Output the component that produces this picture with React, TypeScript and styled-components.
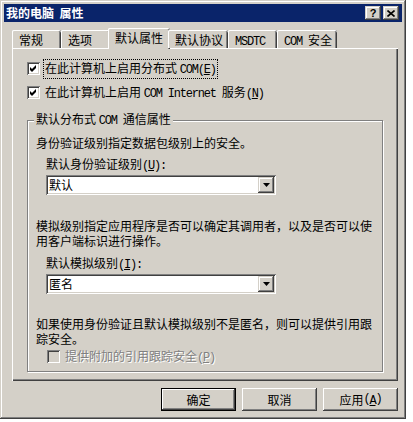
import React from "react";
import styled, { createGlobalStyle } from "styled-components";

const FACE = "#D4D0C8";

const Global = createGlobalStyle`
  html, body { margin: 0; padding: 0; background: #fff; }
  body {
    font-family: "Noto Sans CJK SC", "Noto Sans", sans-serif;
    font-size: 12px;
    color: #000;
  }
`;

const raised = `box-shadow: inset -1px -1px #404040, inset 1px 1px ${FACE}, inset -2px -2px #808080, inset 2px 2px #fff;`;
const sunken = `box-shadow: inset 1px 1px #808080, inset -1px -1px #fff, inset 2px 2px #404040, inset -2px -2px ${FACE};`;

const Window = styled.div`
  width: 406px;
  height: 419px;
  box-sizing: border-box;
  background: ${FACE};
  padding: 4px;
  box-shadow: inset -1px -1px #404040, inset 1px 1px ${FACE}, inset -2px -2px #808080, inset 2px 2px #fff;
  display: flex;
  flex-direction: column;
`;

const TitleBar = styled.div`
  height: 18px;
  background: #0a246a;
  display: flex;
  align-items: center;
  padding: 0 3px 0 2px;
  gap: 2px;
`;

const TitleText = styled.div`
  flex: 1;
  color: #fff;
  font-weight: bold;
  font-size: 12px;
  line-height: 18px;
  white-space: pre;
`;

const CapButton = styled.div`
  width: 16px;
  height: 14px;
  box-sizing: border-box;
  background: ${FACE};
  ${raised}
  display: flex;
  align-items: center;
  justify-content: center;
  font-family: "Liberation Sans", sans-serif;
  font-weight: bold;
  font-size: 11px;
  line-height: 14px;
  color: #000;
`;

const Body = styled.div`
  display: flex;
  flex-direction: column;
  padding: 6px 4px 0 8px;
`;

const TabStrip = styled.div`
  display: flex;
  align-items: flex-end;
  height: 20px;
  position: relative;
  z-index: 1;
`;

const Tab = styled.div<{ $w: number; $active?: boolean }>`
  box-sizing: border-box;
  width: ${(p) => p.$w}px;
  height: ${(p) => (p.$active ? 21 : 18)}px;
  margin: 0 ${(p) => (p.$active ? -2 : 0)}px ${(p) => (p.$active ? -1 : 0)}px;
  padding: 2px 0 0 7px;
  line-height: 15px;
  background: ${FACE};
  border-radius: 2px 2px 0 0;
  box-shadow: inset 1px 0 #fff, inset 0 1px #fff, inset -1px 0 #404040, inset -2px 0 #808080;
  white-space: nowrap;
`;

const Panel = styled.div`
  box-sizing: border-box;
  width: 386px;
  height: 333px;
  background: ${FACE};
  box-shadow: inset 1px 1px #fff, inset -1px -1px #404040, inset -2px -2px #808080;
  padding: 12px 15px 0 15px;
  display: flex;
  flex-direction: column;
`;

const CheckRow = styled.div<{ $mt?: number; $ml?: number; $h?: number }>`
  display: flex;
  align-items: center;
  gap: 3px;
  height: ${(p) => p.$h ?? 17}px;
  margin-top: ${(p) => p.$mt ?? 0}px;
  margin-left: ${(p) => p.$ml ?? 0}px;
`;

const Box = styled.div<{ $disabled?: boolean }>`
  width: 13px;
  height: 13px;
  box-sizing: border-box;
  flex: none;
  background: ${(p) => (p.$disabled ? FACE : "#fff")};
  ${sunken}
  display: flex;
  align-items: center;
  justify-content: center;
`;

const CheckLabel = styled.span<{ $focus?: boolean; $disabled?: boolean }>`
  border: 1px ${(p) => (p.$focus ? "dotted #000" : "solid transparent")};
  padding: 0 1px;
  line-height: 15px;
  white-space: nowrap;
  color: ${(p) => (p.$disabled ? "#808080" : "#000")};
  text-shadow: ${(p) => (p.$disabled ? "1px 1px 0 #fff" : "none")};
`;

const Group = styled.fieldset`
  margin: 11px 0 0 0;
  padding: 0;
  border: 1px solid #808080;
  box-shadow: 1px 1px 0 #fff, inset 1px 1px 0 #fff;
  min-inline-size: 0;
`;

const Legend = styled.legend`
  margin-left: 6px;
  padding: 0 2px;
  line-height: 14px;
  background: ${FACE};
  white-space: nowrap;
`;

const GroupInner = styled.div`
  display: flex;
  flex-direction: column;
  padding: 7px 0 7px 8px;
`;

const Para = styled.div<{ $mt?: number }>`
  width: 340px;
  line-height: 15px;
  margin-top: ${(p) => p.$mt ?? 0}px;
`;

const FieldLabel = styled.div<{ $mt: number }>`
  margin: ${(p) => p.$mt}px 0 0 10px;
  line-height: 14px;
  white-space: nowrap;
`;

const Combo = styled.div`
  box-sizing: border-box;
  width: 230px;
  height: 20px;
  margin: 2px 0 0 10px;
  background: #fff;
  ${sunken}
  display: flex;
  align-items: center;
  padding: 2px;
`;

const ComboText = styled.div`
  flex: 1;
  padding-left: 1px;
  line-height: 16px;
`;

const DropButton = styled.div`
  width: 16px;
  height: 16px;
  box-sizing: border-box;
  background: ${FACE};
  ${raised}
  display: flex;
  align-items: center;
  justify-content: center;
`;

const Footer = styled.div`
  display: flex;
  justify-content: flex-end;
  gap: 6px;
  margin-top: 7px;
`;

const Button = styled.div<{ $default?: boolean }>`
  width: 75px;
  height: 23px;
  box-sizing: border-box;
  background: ${FACE};
  display: flex;
  align-items: center;
  justify-content: center;
  line-height: 15px;
  box-shadow: ${(p) =>
    p.$default
      ? `inset 0 0 0 1px #000, inset -2px -2px #404040, inset 2px 2px #fff, inset -3px -3px #808080`
      : `inset -1px -1px #404040, inset 1px 1px #fff, inset -2px -2px #808080, inset 2px 2px ${FACE}`};
`;

const Lat = styled.span`
  font-family: "Liberation Mono", monospace;
  font-size: 12px;
  letter-spacing: -1.2px;
`;

const Key = styled.span`
  text-decoration: underline;
`;

const Check = () => (
  <svg width="9" height="9" viewBox="0 0 9 9">
    <polygon points="1,3 3,5 7,1 7,4 3,8 1,6" fill="#000" />
  </svg>
);

const Arrow = () => (
  <svg width="7" height="4" viewBox="0 0 7 4">
    <polygon points="0,0 7,0 3.5,4" fill="#000" />
  </svg>
);

const CloseGlyph = () => (
  <svg width="8" height="7" viewBox="0 0 8 7">
    <path d="M0.5 0.5 L7.5 6.5 M7.5 0.5 L0.5 6.5" stroke="#000" strokeWidth="1.6" />
  </svg>
);

export default function App() {
  return (
    <>
      <Global />
      <Window>
        <TitleBar>
          <TitleText>我的电脑  属性</TitleText>
          <CapButton>?</CapButton>
          <CapButton>
            <CloseGlyph />
          </CapButton>
        </TitleBar>
        <Body>
          <TabStrip>
            <Tab $w={49}>常规</Tab>
            <Tab $w={49}>选项</Tab>
            <Tab $w={62} $active>
              默认属性
            </Tab>
            <Tab $w={60}>默认协议</Tab>
            <Tab $w={49}>
              <Lat>MSDTC</Lat>
            </Tab>
            <Tab $w={60}>
              <Lat>COM </Lat>安全
            </Tab>
          </TabStrip>
          <Panel>
            <CheckRow>
              <Box>
                <Check />
              </Box>
              <CheckLabel $focus>
                在此计算机上启用分布式 <Lat>COM(</Lat>
                <Key>
                  <Lat>E</Lat>
                </Key>
                <Lat>)</Lat>
              </CheckLabel>
            </CheckRow>
            <CheckRow $mt={7}>
              <Box>
                <Check />
              </Box>
              <CheckLabel>
                在此计算机上启用 <Lat>COM Internet </Lat>服务<Lat>(</Lat>
                <Key>
                  <Lat>N</Lat>
                </Key>
                <Lat>)</Lat>
              </CheckLabel>
            </CheckRow>
            <Group>
              <Legend>
                默认分布式 <Lat>COM </Lat>通信属性
              </Legend>
              <GroupInner>
                <Para>身份验证级别指定数据包级别上的安全。</Para>
                <FieldLabel $mt={7}>
                  默认身份验证级别<Lat>(</Lat>
                  <Key>
                    <Lat>U</Lat>
                  </Key>
                  <Lat>):</Lat>
                </FieldLabel>
                <Combo>
                  <ComboText>默认</ComboText>
                  <DropButton>
                    <Arrow />
                  </DropButton>
                </Combo>
                <Para $mt={23}>
                  模拟级别指定应用程序是否可以确定其调用者，以及是否可以使用客户端标识进行操作。
                </Para>
                <FieldLabel $mt={8}>
                  默认模拟级别<Lat>(</Lat>
                  <Key>
                    <Lat>I</Lat>
                  </Key>
                  <Lat>):</Lat>
                </FieldLabel>
                <Combo>
                  <ComboText>匿名</ComboText>
                  <DropButton>
                    <Arrow />
                  </DropButton>
                </Combo>
                <Para $mt={22}>
                  如果使用身份验证且默认模拟级别不是匿名，则可以提供引用跟踪安全。
                </Para>
                <CheckRow $mt={3} $ml={11} $h={15}>
                  <Box $disabled />
                  <CheckLabel $disabled>
                    提供附加的引用跟踪安全<Lat>(</Lat>
                    <Key>
                      <Lat>P</Lat>
                    </Key>
                    <Lat>)</Lat>
                  </CheckLabel>
                </CheckRow>
              </GroupInner>
            </Group>
          </Panel>
          <Footer>
            <Button $default>确定</Button>
            <Button>取消</Button>
            <Button>
              应用<Lat>(</Lat>
              <Key>
                <Lat>A</Lat>
              </Key>
              <Lat>)</Lat>
            </Button>
          </Footer>
        </Body>
      </Window>
    </>
  );
}
